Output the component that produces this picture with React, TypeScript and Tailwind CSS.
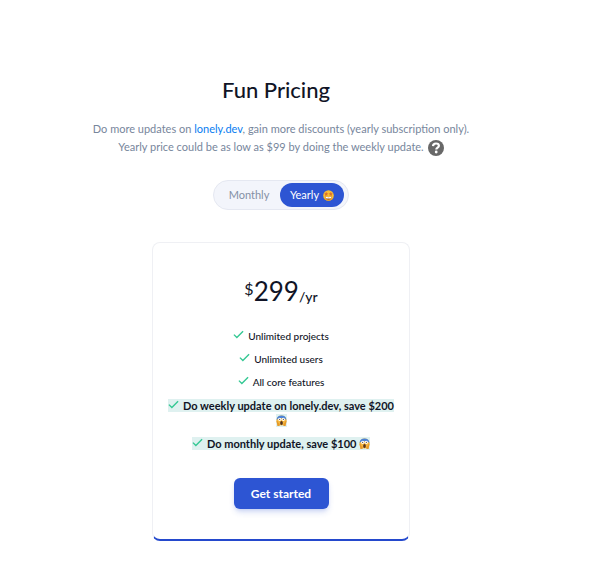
import { useState, type ReactNode } from "react";

function CheckIcon() {
  return (
    <svg viewBox="0 0 12 10" className="mr-1 inline-block h-[10px] w-[11px] align-baseline" fill="none" stroke="#34c893" strokeWidth="1.5" aria-hidden="true">
      <path d="M1 4.600 4.200 7.800 11 .8" />
    </svg>
  );
}

function HelpIcon() {
  return (
    <svg viewBox="0 0 16 16" className="h-4 w-4" aria-hidden="true">
      <circle cx="8" cy="8" r="8" fill="#686868" />
      <path d="M5 6.100C5.100 4.200 6.300 3.500 8 3.500c1.800 0 2.900.9 2.900 2.300 0 1.900-2.600 1.800-2.600 3.700" fill="none" stroke="#fff" strokeWidth="2.200" />
      <circle cx="8.200" cy="12" r="1.400" fill="#fff" />
    </svg>
  );
}

function StarStruck() {
  return (
    <svg viewBox="0 0 24 24" className="h-[11px] w-[11px]" aria-hidden="true">
      <circle cx="12" cy="12" r="11.500" fill="#f9bd35" />
      <path d="M1.500 17C4 22 8 23.500 12 23.500S20 22 22.500 17C19 20 5 20 1.500 17Z" fill="#e99b24" />
      <path d="m7 4 1.300 3 3.200.4-2.400 2.200.7 3.300L7 11.300l-2.800 1.600.7-3.300-2.400-2.200L5.700 7Z" fill="#d9702a" />
      <path d="m17 4 1.300 3 3.200.4-2.400 2.200.7 3.300-2.800-1.600-2.800 1.600.7-3.300-2.400-2.200 3.200-.4Z" fill="#d9702a" />
      <path d="M5 14c4 1.500 10 1.500 14 0-.5 4.500-3 6.500-7 6.500S5.500 18.500 5 14Z" fill="#8a481a" />
      <path d="M5.500 14.500c4 1.400 9 1.400 13 0l-.8 3.500c-3 1-8.400 1-11.400 0Z" fill="#fff" />
    </svg>
  );
}

function Scream() {
  return (
    <svg viewBox="0 0 24 24" className="inline-block h-[11px] w-[11px] align-[-1px]" aria-hidden="true">
      <circle cx="12" cy="12" r="11" fill="#f5b840" />
      <path d="M1.200 11C1.500 4 6 1 12 1s10.500 3 10.800 10C19 6 5 6 1.200 11Z" fill="#4c83d6" />
      <circle cx="8" cy="9.500" r="3.500" fill="#fff" />
      <circle cx="16" cy="9.500" r="3.500" fill="#fff" />
      <circle cx="8" cy="9.500" r="1.300" fill="#473526" />
      <circle cx="16" cy="9.500" r="1.300" fill="#473526" />
      <ellipse cx="12" cy="17.500" rx="3" ry="4.500" fill="#543421" />
      <path d="M1 13c2-1 3 1 4 4l3 3v4H3ZM23 13c-2-1-3 1-4 4l-3 3v4h5Z" fill="#e79a28" />
    </svg>
  );
}

function Feature({ children, highlighted = false }: { children: ReactNode; highlighted?: boolean }) {
  return (
    <li className={highlighted ? "text-[11px] font-bold" : "text-[10px] font-medium"}>
      <span className={highlighted ? "bg-[#dff1f0]" : ""}>
        <CheckIcon />
        {children}
      </span>
    </li>
  );
}

export default function App() {
  const [yearly, setYearly] = useState(true);
  const selected = "bg-[#2d55d3] text-white";
  const idle = "text-[#8490a5]";

  return (
    <main className="min-h-screen bg-white pt-[74px] pr-[38px] pb-5 font-[Lato,sans-serif] text-[#101426]">
      <header className="text-center">
        <h1 className="pr-[10px] text-[22px] leading-8 font-medium">Fun Pricing</h1>
        <p className="mt-[14px] text-[11px] leading-[18px] text-[#77869c]">
          Do more updates on <a href="#lonely" className="text-[#087df1]">lonely.dev</a>, gain more discounts (yearly subscription only).
          <br />
          Yearly price could be as low as $99 by doing the weekly update.
          <button type="button" aria-label="About weekly updates" className="ml-1 inline-block align-middle">
            <HelpIcon />
          </button>
        </p>
      </header>

      <div role="group" aria-label="Billing period" className="mx-auto mt-6 flex h-[30px] w-[136px] items-center rounded-full border border-[#e5e8f1] bg-[#f3f5fb] px-1 text-[11px]">
        <button type="button" aria-pressed={!yearly} onClick={() => setYearly(false)} className={`h-6 flex-1 rounded-full ${yearly ? idle : selected}`}>
          Monthly
        </button>
        <button type="button" aria-pressed={yearly} onClick={() => setYearly(true)} className={`flex h-6 w-16 items-center justify-center gap-1 rounded-full ${yearly ? selected : idle}`}>
          Yearly <StarStruck />
        </button>
      </div>

      <section aria-label="Yearly plan" className="mx-auto mt-8 w-[258px] rounded-lg border border-b-2 border-[#eff0f4] border-b-[#2449cd] px-3 pt-[30px] pb-[30px] text-center">
        <p className="flex h-9 justify-center">
          <span className="text-base leading-8">$</span>
          <span className="text-[26px] leading-9">299</span>
          <span className="self-end text-sm leading-6 font-medium">/yr</span>
        </p>
        <ul className="mt-5 flex flex-col gap-2 leading-[15px]">
          <Feature>Unlimited projects</Feature>
          <Feature>Unlimited users</Feature>
          <Feature>All core features</Feature>
          <Feature highlighted>Do weekly update on lonely.dev, save $200 <Scream /></Feature>
          <Feature highlighted>Do monthly update, save $100 <Scream /></Feature>
        </ul>
        <button type="button" className="mt-[27px] h-[31px] w-[95px] rounded-md bg-[#2d55d3] text-xs font-bold text-white shadow-md shadow-[#2d55d3]/20">
          Get started
        </button>
      </section>
    </main>
  );
}
